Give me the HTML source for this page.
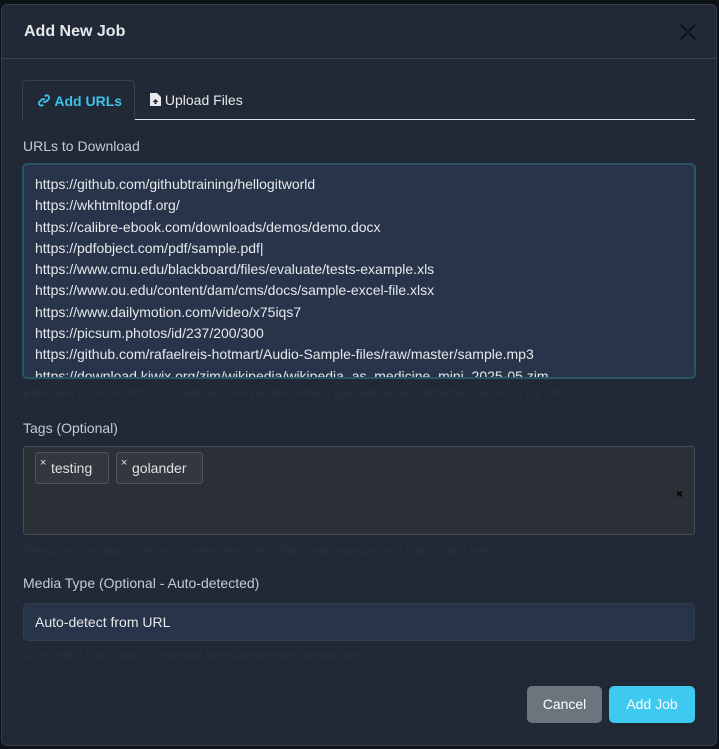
<!DOCTYPE html>
<html><head><style>
*{box-sizing:border-box;margin:0;padding:0}
body{width:719px;height:749px;background:#0d1218;font-family:"Liberation Sans",sans-serif;position:relative;overflow:hidden;color:#dee2e6}
.modal{position:absolute;left:1px;top:4px;width:716px;height:742px;background:#212936;border:1px solid #353d4a;border-radius:6px}
.hdr{height:54px;border-bottom:1px solid #3a4250;position:relative}
.hdr h5{position:absolute;left:22px;top:18px;font-size:16px;font-weight:bold;color:#e6e8eb}
.x{position:absolute;right:20px;top:19px}
.tabs{position:absolute;left:22px;top:80px;width:673px;height:40px;border-bottom:1px solid #dee2e6}
.tab1{position:absolute;left:0;top:0;width:113px;height:40px;border:1px solid #3a4250;border-bottom:1px solid #212936;border-radius:5px 5px 0 0;background:#212936;color:#3dc3ea;font-size:14px;font-weight:bold;padding:12px 0 0 14px}
.tab2{position:absolute;left:128px;top:12px;font-size:14px;color:#e6e8eb}
.lbl{position:absolute;left:23px;font-size:14px;color:#c7cbd1}
.ta{position:absolute;left:22px;top:163px;width:674px;height:216px;background:#28344a;border:2px solid #2a5664;border-radius:5px;overflow:hidden;padding:9px 11px;font-size:14px;line-height:21.3px;color:#e6e8eb;white-space:pre}
.help{position:absolute;left:23px;font-size:12px;color:#283039}
.tags{position:absolute;left:23px;top:446px;width:672px;height:89px;background:#2b2f36;border:1px solid #454b54;border-radius:3px}
.tag{position:absolute;top:5px;height:32px;background:#33373e;border:1px solid #4d535b;border-radius:3px;font-size:14px;color:#e0e2e5;padding:7px 0 0 15px}
.tag i{position:absolute;left:4px;top:4px;font-style:normal;font-size:11px}
.sel{position:absolute;left:23px;top:603px;width:672px;height:38px;background:#28344a;border:1px solid #323d4f;border-radius:5px;font-size:14px;color:#e6e8eb;padding:10px 11px}
.btn{position:absolute;top:686px;height:37px;border-radius:5px;font-size:14px;color:#fff;padding:10px 0;text-align:center}
</style></head><body>
<div class="modal">
<div class="hdr"><h5>Add New Job</h5>
<svg class="x" width="16" height="16" viewBox="0 0 16 16"><path d="M1 1L15 15M15 1L1 15" stroke="#111" stroke-width="1.6"/></svg></div>
</div>
<div class="tabs">
<div class="tab1"><svg width="14" height="13" viewBox="0 0 16 16" style="vertical-align:-1px"><path d="M7 9a3 3 0 0 0 4 0l3-3a3 3 0 0 0-4-4l-1 1M9 7a3 3 0 0 0-4 0l-3 3a3 3 0 0 0 4 4l1-1" stroke="#3dc3ea" stroke-width="2.2" fill="none"/></svg> Add URLs</div>
<div class="tab2"><svg width="11" height="13" viewBox="0 0 11 13" style="vertical-align:-1px"><path d="M0 0h7l4 4v9H0z" fill="#e6e8eb"/><path d="M5.5 6l-3 3h2v2h2V9h2z" fill="#212936"/></svg> Upload Files</div>
</div>
<div class="lbl" style="top:138px">URLs to Download</div>
<div class="ta">https://github.com/githubtraining/hellogitworld
https://wkhtmltopdf.org/
https://calibre-ebook.com/downloads/demos/demo.docx
https://pdfobject.com/pdf/sample.pdf|
https://www.cmu.edu/blackboard/files/evaluate/tests-example.xls
https://www.ou.edu/content/dam/cms/docs/sample-excel-file.xlsx
https://www.dailymotion.com/video/x75iqs7
https://picsum.photos/id/237/200/300
https://github.com/rafaelreis-hotmart/Audio-Sample-files/raw/master/sample.mp3
https://download.kiwix.org/zim/wikipedia/wikipedia_as_medicine_mini_2025-05.zim</div>
<div class="help" style="top:386px">Enter one or more URLs to download, one per line. Media type will be auto-detected based on the URL.</div>
<div class="lbl" style="top:420px">Tags (Optional)</div>
<div class="tags">
<div class="tag" style="left:11px;width:74px"><i>×</i>testing</div>
<div class="tag" style="left:92px;width:87px"><i>×</i>golander</div>
<span style="position:absolute;right:11px;top:40px;font-size:12px;color:#000;font-weight:bold">×</span>
</div>
<div class="help" style="top:543px">Select existing tags or type to create new ones. Tags help organize and find content later.</div>
<div class="lbl" style="top:575px">Media Type (Optional - Auto-detected)</div>
<div class="sel">Auto-detect from URL</div>
<div class="help" style="top:648px">Only select if you want to override the auto-detected media type.</div>
<div class="btn" style="left:527px;width:75px;background:#6c757d">Cancel</div>
<div class="btn" style="left:609px;width:86px;background:#3dc9f0;color:#fff">Add Job</div>
</body></html>
